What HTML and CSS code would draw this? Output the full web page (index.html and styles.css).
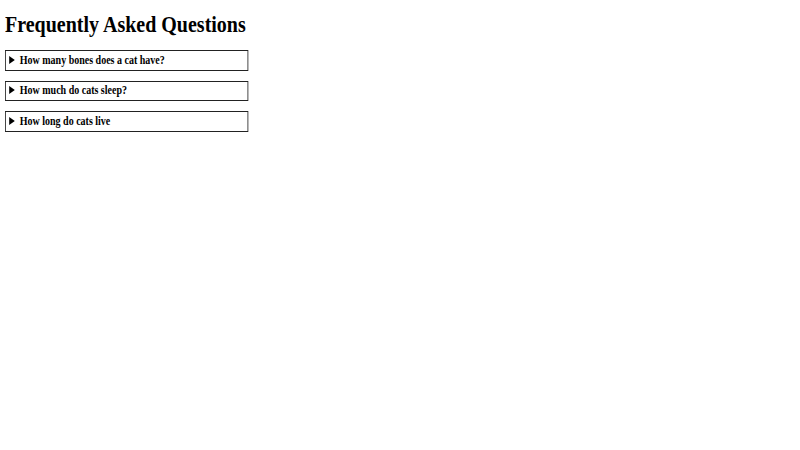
FILE: index.html
```html
<!DOCTYPE html>
<html>
<head>
<meta charset="utf-8">
<link rel="stylesheet" href="styles.css">
<title>FAQ</title>
</head>
<body>
<main class="page">
<h1 class="title">Frequently Asked Questions</h1>
<details class="faq">
<summary class="question">How many bones does a cat have?</summary>
</details>
<details class="faq">
<summary class="question">How much do cats sleep?</summary>
</details>
<details class="faq">
<summary class="question">How long do cats live</summary>
</details>
</main>
</body>
</html>
```

FILE: styles.css
```css
body {
  margin: 0;
  font-family: "Liberation Serif", "Times New Roman", serif;
  color: #000;
  background: #fff;
}
.page {
  padding: 0 6px;
  transform: scaleX(0.8333);
  transform-origin: 0 0;
}
.title {
  font-size: 24px;
  font-weight: bold;
  margin: 10.8px 0 12.4px 0;
}
.faq {
  box-sizing: border-box;
  width: 292px;
  border: 1px solid #222;
  padding: 1.8px 4px;
  margin-bottom: 9.8px;
}
.question {
  font-size: 12px;
  font-weight: bold;
  cursor: pointer;
}
```
